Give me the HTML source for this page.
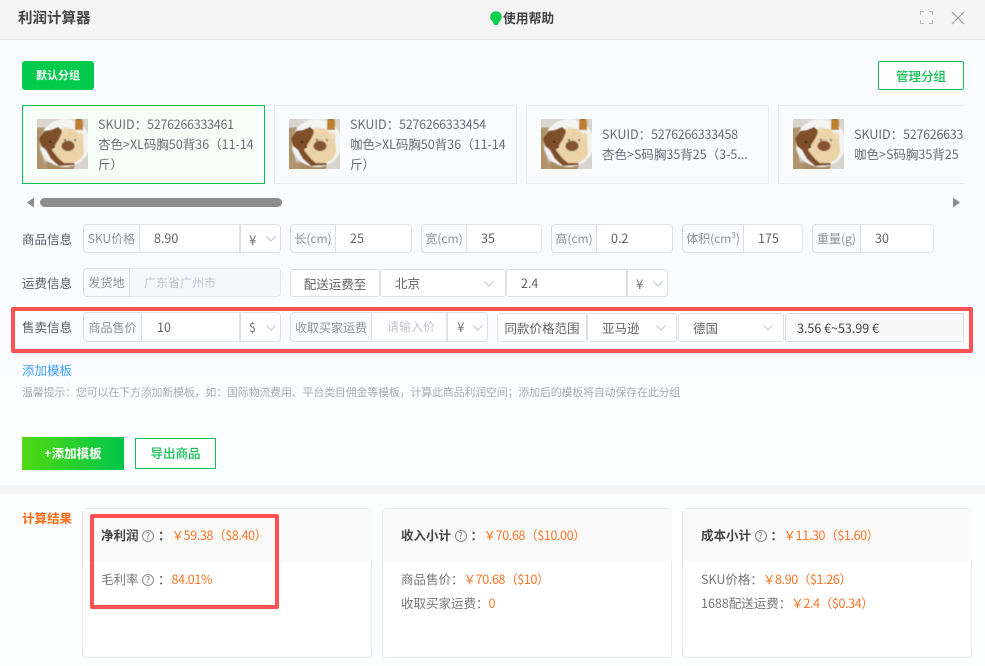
<!DOCTYPE html>
<html lang="zh"><head><meta charset="utf-8"><title>利润计算器</title>
<style>
html,body{margin:0;padding:0}
body{width:985px;height:666px;overflow:hidden;position:relative;background:#fdfeff;font-family:"Noto Sans CJK SC","Liberation Sans",sans-serif;font-size:12.5px;color:#606266}
.a{position:absolute;box-sizing:border-box;white-space:nowrap}
.lb{left:22px;width:60px;height:20px;line-height:20px;color:#555c66}
.ad{background:#f8fafd;border:1px solid #dcdfe6;border-radius:4px 0 0 4px;color:#909399;text-align:center}
.in{background:#fff;border:1px solid #dfe3ea;border-left:0;border-radius:0 4px 4px 0;color:#606266}
.mid{background:#fff;border:1px solid #dfe3ea;border-left:0}
.sel{background:#fff;border:1px solid #dcdfe6;border-radius:0 4px 4px 0;color:#777;font-size:13.5px}
.bx{background:#fff;border:1px solid #dcdfe6;border-radius:3px;color:#606266}
.ch{position:absolute;width:10px;height:6px}
.card{top:105px;width:243px;height:79px;border:1px solid #e9edf2;background:#f9fbff}
.card svg{position:absolute;left:14px;top:13px}
.card .t{position:absolute;left:75px;line-height:20px;color:#686c73}
.card .t i{font-style:normal;letter-spacing:-.27px}
.rc{top:508px;width:290px;height:150px;border:1px solid #eaeaec;border-radius:4px;background:#fff}
.rh{position:absolute;left:0;top:0;right:-1px;height:52px;background:#fafafa}
.b{font-weight:700;color:#444}
.o{color:#ff7425;letter-spacing:-.35px}
.q{position:absolute;box-sizing:border-box;width:12px;height:12px;border:1px solid #888;border-radius:50%;font-size:9px;line-height:10px;text-align:center;color:#777;font-weight:400}
.rt{position:absolute;white-space:nowrap;line-height:20px}
.c{font-weight:700;color:#555}
</style></head><body>
<svg width="0" height="0" style="position:absolute"><defs>
<filter id="sf" x="-5%" y="-5%" width="110%" height="110%"><feGaussianBlur stdDeviation="0.5"/></filter>
<symbol id="bear" viewBox="0 0 51 50">
<g filter="url(#sf)">
<rect x="-2" y="-2" width="55" height="54" fill="#d9d5cd"/>
<polygon points="-2,9 8,8 3,30 8,44 20,52 -2,52" fill="#b0946c"/>
<polygon points="8,42 20,46 38,47 36,52 12,52" fill="#a98c64"/>
<ellipse cx="28" cy="24" rx="25" ry="24" fill="#f3f3f2"/>
<path d="M2 20 7 12 14 11 21 8 26 12 38 46 22 47 14 40 9 31 4 27Z" fill="#7f4f2a"/>
<path d="M15 31 22 20 26 11 31 9 38 11 46 19 47 34 44 40 37 44 27 44 22 40 18 35Z" fill="#ebd3a8"/>
<circle cx="28" cy="12" r="3.500" fill="#eed8b2"/>
<circle cx="43" cy="17" r="3.500" fill="#eed8b2"/>
<ellipse cx="31" cy="27" rx="6.500" ry="5.200" fill="#855530"/>
<circle cx="28" cy="21" r="1" fill="#444"/><circle cx="38" cy="21" r="1" fill="#444"/>
<circle cx="13" cy="23" r="1.100" fill="#111"/><circle cx="17" cy="28" r="1.100" fill="#222"/>
<rect x="38" y="1" width="8" height="10" fill="#c0812f"/>
<rect x="39" y="-2" width="6" height="3" fill="#a06c30"/>
</g>
</symbol>
<symbol id="cv" viewBox="0 0 10 6"><path d="M.5.5 5 5 9.5.5" fill="none" stroke="#c0c4cc" stroke-width="1"/></symbol>
</defs></svg>

<!-- main bg -->
<div class="a" style="left:0;top:40px;width:985px;height:445px;background:linear-gradient(#f9fbff,#f9fbff 45%,#fdfeff)"></div>
<!-- header -->
<div class="a" style="left:0;top:0;width:985px;height:40px;background:#f5f5f5;border-bottom:1px solid #e4e6ea"></div>
<div class="a" style="left:18px;top:8px;font-size:14.5px;line-height:20px;font-weight:700;color:#444">利润计算器</div>
<svg class="a" style="left:490px;top:11px" width="12" height="15" viewBox="0 0 12 15"><path d="M6 .2A5.800 5.800 0 0 0 .2 6c0 2.600 1.800 3.600 3 5.500L4 14h4l.8-2.500c1.200-1.900 3-2.900 3-5.500A5.800 5.800 0 0 0 6 .2Z" fill="#0ccf50"/></svg>
<div class="a" style="left:503px;top:8px;font-size:12.8px;line-height:20px;font-weight:700;color:#444">使用帮助</div>
<svg class="a" style="left:920px;top:11px" width="13" height="13" viewBox="0 0 13 13"><path d="M.5 4V.5H4M9 .5h3.500V4M12.500 9v3.500H9M4 12.500H.5V9" fill="none" stroke="#bbb" stroke-width="1"/></svg>
<svg class="a" style="left:951px;top:11px" width="14" height="14" viewBox="0 0 14 14"><path d="M1 1 13 13M13 1 1 13" fill="none" stroke="#999" stroke-width="1.100"/></svg>

<!-- group buttons -->
<div class="a" style="left:22px;top:61px;width:72px;height:29px;background:#00cb4c;border-radius:3px;color:#fff;text-align:center;line-height:28px;font-size:11px;font-weight:700">默认分组</div>
<div class="a" style="left:878px;top:61px;width:86px;height:29px;background:#fff;border:1px solid #10c053;border-radius:2px;color:#10c053;text-align:center;line-height:27px;font-size:12.5px;font-weight:500">管理分组</div>

<!-- cards -->
<div class="a" style="left:0;top:105px;width:964px;height:80px;overflow:hidden">
<div class="a card" style="left:22px;top:0;border-color:#10c053;background:#f5fff8"><svg width="51" height="50"><use href="#bear"/></svg><div class="t" style="top:8px">SKUID：<i>5276266333461</i><br>杏色&gt;XL码胸50背36（11-14<br>斤）</div></div>
<div class="a card" style="left:274px;top:0"><svg width="51" height="50"><use href="#bear"/></svg><div class="t" style="top:8px">SKUID：<i>5276266333454</i><br>咖色&gt;XL码胸50背36（11-14<br>斤）</div></div>
<div class="a card" style="left:526px;top:0"><svg width="51" height="50"><use href="#bear"/></svg><div class="t" style="top:18px">SKUID：<i>5276266333458</i><br>杏色&gt;S码胸35背25（3-5...</div></div>
<div class="a card" style="left:778px;top:0"><svg width="51" height="50"><use href="#bear"/></svg><div class="t" style="top:18px">SKUID：<i>5276266333</i><br>咖色&gt;S码胸35背25</div></div>
</div>
<!-- scrollbar -->
<svg class="a" style="left:26px;top:197px" width="9" height="11" viewBox="0 0 9 11"><path d="M8 .5V10.500L1 5.500Z" fill="#8c8c8c"/></svg>
<div class="a" style="left:40px;top:198px;width:242px;height:9px;background:#8c8c8c;border-radius:4.5px"></div>
<svg class="a" style="left:952px;top:197px" width="9" height="11" viewBox="0 0 9 11"><path d="M1 .5V10.500L8 5.500Z" fill="#8c8c8c"/></svg>

<!-- row 1 -->
<div class="a lb" style="top:229px">商品信息</div>
<div class="a ad" style="left:83px;top:224px;width:57px;height:29px;line-height:28px;font-size:12px">SKU价格</div>
<div class="a mid" style="left:140px;top:224px;width:100px;height:29px;line-height:26px;padding-left:14px">8.90</div>
<div class="a sel" style="left:240px;top:224px;width:41px;height:29px;line-height:28px;padding-left:8px">¥</div>
<svg class="a ch" style="left:266px;top:236px"><use href="#cv"/></svg>

<div class="a ad" style="left:290px;top:224px;width:46px;height:29px;line-height:28px;font-size:12px">长(cm)</div>
<div class="a in" style="left:336px;top:224px;width:76px;height:29px;line-height:26px;padding-left:14px">25</div>
<div class="a ad" style="left:421px;top:224px;width:46px;height:29px;line-height:28px;font-size:12px">宽(cm)</div>
<div class="a in" style="left:467px;top:224px;width:75px;height:29px;line-height:26px;padding-left:14px">35</div>
<div class="a ad" style="left:551px;top:224px;width:46px;height:29px;line-height:28px;font-size:12px">高(cm)</div>
<div class="a in" style="left:597px;top:224px;width:76px;height:29px;line-height:26px;padding-left:14px">0.2</div>
<div class="a ad" style="left:682px;top:224px;width:62px;height:29px;line-height:28px;font-size:12px">体积(cm<sup style="font-size:8px;line-height:0">3</sup>)</div>
<div class="a in" style="left:744px;top:224px;width:59px;height:29px;line-height:26px;padding-left:14px">175</div>
<div class="a ad" style="left:812px;top:224px;width:49px;height:29px;line-height:28px;font-size:12px">重量(g)</div>
<div class="a in" style="left:861px;top:224px;width:73px;height:29px;line-height:26px;padding-left:14px">30</div>

<!-- row 2 -->
<div class="a lb" style="top:273px">运费信息</div>
<div class="a ad" style="left:83px;top:268px;width:47px;height:29px;line-height:28px;font-size:12px">发货地</div>
<div class="a" style="left:130px;top:268px;width:151px;height:29px;line-height:28px;padding-left:14px;background:#f5f7fa;border:1px solid #e4e7ed;border-left:0;border-radius:0 4px 4px 0;color:#c0c4cc;font-size:12px">广东省广州市</div>
<div class="a bx" style="left:290px;top:269px;width:90px;height:28px;line-height:27px;text-align:center">配送运费至</div>
<div class="a bx" style="left:380px;top:269px;width:126px;height:28px;line-height:26px;padding-left:14px">北京</div>
<svg class="a ch" style="left:484px;top:281px"><use href="#cv"/></svg>
<div class="a bx" style="left:506px;top:269px;width:121px;height:28px;line-height:26px;padding-left:14px;border-radius:3px 0 0 3px">2.4</div>
<div class="a sel" style="left:627px;top:269px;width:41px;height:28px;line-height:26px;padding-left:8px">¥</div>
<svg class="a ch" style="left:653px;top:281px"><use href="#cv"/></svg>

<!-- row 3 -->
<div class="a lb" style="top:317px">售卖信息</div>
<div class="a ad" style="left:83px;top:312px;width:59px;height:30px;line-height:29px;font-size:12px">商品售价</div>
<div class="a mid" style="left:142px;top:312px;width:98px;height:30px;line-height:27px;padding-left:15px">10</div>
<div class="a sel" style="left:240px;top:312px;width:41px;height:30px;line-height:27px;padding-left:8px;font-size:12.5px">$</div>
<svg class="a ch" style="left:266px;top:325px"><use href="#cv"/></svg>
<div class="a ad" style="left:290px;top:312px;width:82px;height:30px;line-height:29px;font-size:12px">收取买家运费</div>
<div class="a mid" style="left:372px;top:312px;width:75px;height:30px;line-height:27px;padding-left:15px;color:#c0c4cc;font-size:12px">请输入价</div>
<div class="a sel" style="left:447px;top:312px;width:41px;height:30px;line-height:27px;padding-left:9px">¥</div>
<svg class="a ch" style="left:473px;top:325px"><use href="#cv"/></svg>
<div class="a bx" style="left:497px;top:313px;width:90px;height:29px;line-height:27px;text-align:center;font-size:12.5px">同款价格范围</div>
<div class="a bx" style="left:587px;top:313px;width:90px;height:29px;line-height:27px;padding-left:14px">亚马逊</div>
<svg class="a ch" style="left:656px;top:325px"><use href="#cv"/></svg>
<div class="a bx" style="left:678px;top:313px;width:106px;height:29px;line-height:27px;padding-left:14px">德国</div>
<svg class="a ch" style="left:763px;top:325px"><use href="#cv"/></svg>
<div class="a bx" style="left:785px;top:313px;width:179px;height:29px;line-height:27px;padding-left:11px;background:#f9f9f9;color:#444">3.56 €~53.99 €</div>
<div class="a" style="left:11px;top:307px;width:962px;height:46px;border:4px solid #ff5252;border-radius:2px"></div>

<div class="a" style="left:22px;top:360px;line-height:20px;color:#409eff">添加模板</div>
<div class="a" style="left:22px;top:384px;line-height:16px;font-size:11px;letter-spacing:-.21px;color:#a8abb0">温馨提示：您可以在下方添加新模板，如：国际物流费用、平台类目佣金等模板，计算此商品利润空间；添加后的模板将自动保存在此分组</div>

<div class="a" style="left:22px;top:437px;width:102px;height:33px;background:linear-gradient(90deg,#52d912,#00c64b);color:#fff;text-align:center;line-height:31px;font-size:12.5px;font-weight:700">+添加模板</div>
<div class="a" style="left:135px;top:438px;width:81px;height:31px;background:#fff;border:1px solid #10c053;color:#10c053;text-align:center;line-height:28px;font-weight:500">导出商品</div>

<!-- divider -->
<div class="a" style="left:0;top:485px;width:985px;height:9px;background:#f5f5f5"></div>

<!-- results -->
<div class="a" style="left:22px;top:508px;line-height:20px;font-weight:700;color:#ff6a13">计算结果</div>

<div class="a rc" style="left:82px"><div class="rh"></div>
<div class="rt b" style="left:18px;top:16px">净利润</div><span class="q" style="left:59px;top:21px">?</span><div class="rt c" style="left:75px;top:16px">：</div><div class="rt o" style="left:88.500px;top:16px">￥59.38（$8.40）</div>
<div class="rt" style="left:18px;top:60px;color:#777">毛利率</div><span class="q" style="left:59px;top:65px">?</span><div class="rt" style="left:75px;top:60px;color:#555">：</div><div class="rt o" style="left:88.500px;top:60px">84.01%</div>
</div>
<div class="a rc" style="left:382px"><div class="rh"></div>
<div class="rt b" style="left:18px;top:16px">收入小计</div><span class="q" style="left:71.500px;top:21px">?</span><div class="rt c" style="left:87.500px;top:16px">：</div><div class="rt o" style="left:100.500px;top:16px">￥70.68（$10.00）</div>
<div class="rt" style="left:18px;top:60px;color:#777">商品售价：<span class="o">￥70.68（$10）</span></div>
<div class="rt" style="left:18px;top:84px;color:#777">收取买家运费：<span class="o">0</span></div>
</div>
<div class="a rc" style="left:682px"><div class="rh"></div>
<div class="rt b" style="left:18px;top:16px">成本小计</div><span class="q" style="left:71.500px;top:21px">?</span><div class="rt c" style="left:87.500px;top:16px">：</div><div class="rt o" style="left:100.500px;top:16px">￥11.30（$1.60）</div>
<div class="rt" style="left:18px;top:60px;color:#777">SKU价格：<span class="o">￥8.90（$1.26）</span></div>
<div class="rt" style="left:18px;top:84px;color:#777">1688配送运费：<span class="o">￥2.4（$0.34）</span></div>
</div>
<div class="a" style="left:90px;top:514px;width:189px;height:95px;border:4px solid #ff5252;border-radius:2px"></div>
</body></html>
